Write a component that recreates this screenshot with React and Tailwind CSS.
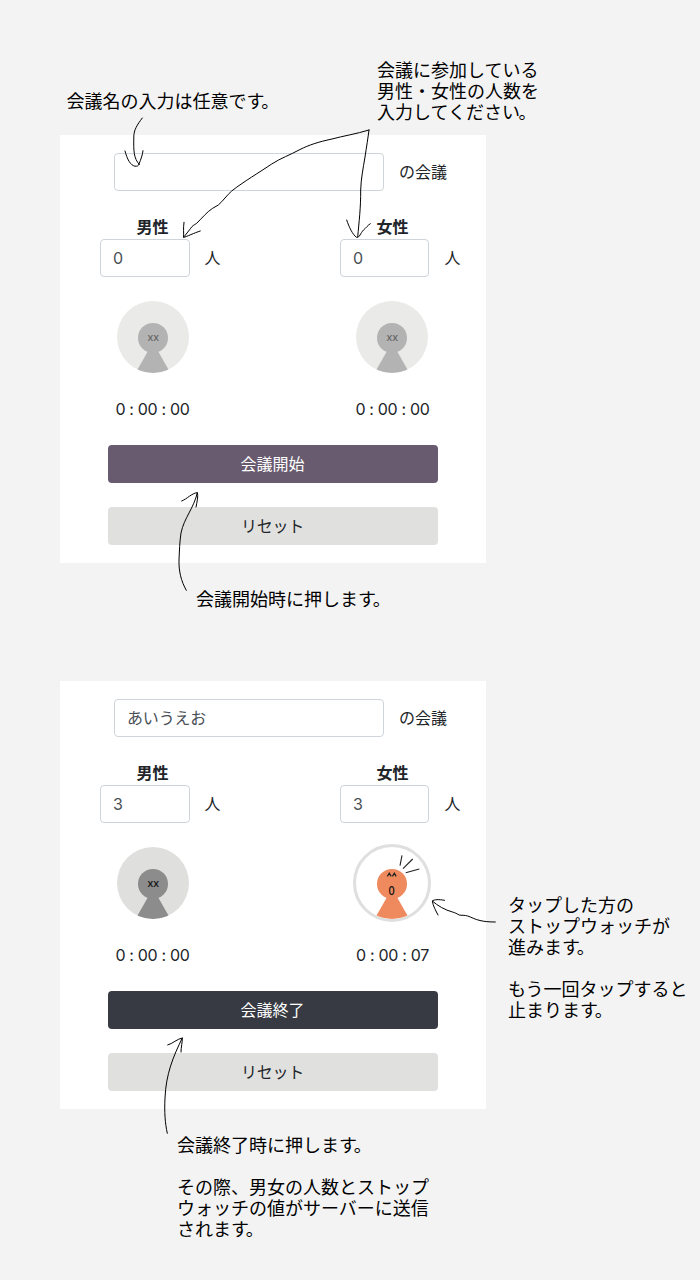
const AVATAR_THEMES = {
  idle: { disc: '#dfdfdd', figure: '#8c8c8c' },
  active: { disc: '#ffffff', figure: '#ef8a5f' },
};

function Avatar({ id, active, dimmed }) {
  const theme = active ? AVATAR_THEMES.active : AVATAR_THEMES.idle;
  return (
    <svg
      viewBox="-40 -40 80 80"
      className={dimmed ? 'h-20 w-20 shrink-0 opacity-65' : 'h-20 w-20 shrink-0'}
    >
      <defs>
        <clipPath id={id}>
          <circle r="36" />
        </clipPath>
      </defs>
      {active ? (
        <circle r="37.5" fill="#ffffff" stroke="#dfdfdf" strokeWidth="3" />
      ) : (
        <circle r="36" fill={theme.disc} />
      )}
      <g fill={theme.figure} clipPath={`url(#${id})`}>
        <circle cy="0.9" r="15" />
        <path d="M-5 14H5L18 37H-18Z" />
      </g>
      {active ? (
        <g>
          <path d="M8 -17.3L10 -27.7M11 -14.3L20.7 -24M13.7 -10.2L27.3 -14" stroke="#222" strokeWidth="1.1" fill="none" />
          <path d="M-4.6 -6.6L-2.7 -9.8L-0.8 -6.6M0.4 -6.6L2.3 -9.8L4.2 -6.6" stroke="#222" strokeWidth="1.3" fill="none" />
          <text x="-0.5" y="11.5" textAnchor="middle" fontSize="12" fontWeight="500" fontFamily="'Noto Sans', sans-serif" textLength="6.2" lengthAdjust="spacingAndGlyphs" fill="#111">0</text>
        </g>
      ) : (
        <text x="0.3" y="4.2" textAnchor="middle" fontSize="11.5" fontWeight="500" fontFamily="'Noto Sans', sans-serif" textLength="11.5" lengthAdjust="spacingAndGlyphs" fill="#111">xx</text>
      )}
    </svg>
  );
}

function Field({ className, value }) {
  return (
    <input
      type="text"
      readOnly
      value={value}
      className={`h-[38px] rounded border border-[#ced4da] bg-white px-3 text-[#495057] outline-none ${className}`}
    />
  );
}

function Group({ id, label, count, time, active, dimmed, avatarClass, inputWidth, gap }) {
  return (
    <div className="flex w-60 shrink-0 flex-col">
      <div className="w-[105px] text-center font-bold">{label}</div>
      <div className={`flex items-center ${gap}`}>
        <Field value={count} className={inputWidth} />
        <span className="-ml-[0.5px]">人</span>
      </div>
      <div className="mt-5 flex w-[105px] flex-col items-center">
        <div className={avatarClass}>
          <Avatar id={id} active={active} dimmed={dimmed} />
        </div>
        <div className="mt-5 whitespace-nowrap tracking-[-0.02em] [font-feature-settings:'calt'_0]">{time}</div>
      </div>
    </div>
  );
}

function MeetingCard({ id, name, count, femaleTime, running }) {
  return (
    <section className="flex h-[428px] w-[426px] shrink-0 flex-col overflow-hidden bg-white pt-[18px] text-base leading-6 text-[#212529]">
      <div className="flex items-center gap-[15px] pl-[54px]">
        <Field value={name} className="w-[270px] pb-[3px] tracking-[-0.01em]" />
        <span>の会議</span>
      </div>
      <div className="mt-6 flex pl-10">
        <Group id={`${id}-m`} label="男性" count={count} time="0 : 00 : 00" dimmed={!running} avatarClass="ml-px" inputWidth="w-[90px]" gap="gap-[15px]" />
        <Group id={`${id}-f`} label="女性" count={count} time={femaleTime} active={running} dimmed={!running} avatarClass="mr-px" inputWidth="w-[89px]" gap="gap-4" />
      </div>
      <div className="ml-12 mt-6 flex w-[330px] flex-col gap-6">
        <button className={running ? 'h-[38px] rounded bg-[#373a42] pr-px text-white' : 'h-[38px] rounded bg-[#685b6f] pr-px text-white'}>
          {running ? '会議終了' : '会議開始'}
        </button>
        <button className="h-[38px] rounded bg-[#e0e0de] pb-px pr-px tracking-[-0.015em]">リセット</button>
      </div>
    </section>
  );
}

function NoteLine({ text }) {
  if (!text.endsWith('。')) {
    return <span className="block h-[21px]">{text}</span>;
  }
  return (
    <span className="block h-[21px]">
      {text.slice(0, -2)}
      <span className="tracking-[-1.5px]">{text.slice(-2)}</span>
    </span>
  );
}

function Note({ className = '', lines }) {
  return (
    <p lang="ja" className={`whitespace-nowrap text-lg leading-[21px] text-black ${className}`}>
      {lines.map((line, i) => (
        <NoteLine key={i} text={line} />
      ))}
    </p>
  );
}

function Arrows() {
  return (
    <svg
      viewBox="0 0 700 1280"
      className="pointer-events-none absolute left-0 top-0 h-[1280px] w-[700px]"
      fill="none"
      stroke="#000"
      strokeWidth="1"
      strokeLinecap="round"
      strokeLinejoin="round"
    >
      <path d="M142.3 118C137 125 133.8 130 133.8 137C133.6 151 133.5 158 139.3 164.5M125 151C127 159 130.500 165.500 135 166.200C137 166.400 138.500 166 139 164C141 159 142.500 155 143 150.700" />
      <path d="M369 130C356 134 343 136 332 139C318 142 309 145 300 149.500C290 155 281 158 271.700 164C260 172 243 182 231.700 191C227 195 223 201 218.300 205L212.300 208.500C207 212 202 218 196.700 223.300C194 225 192 226 190.700 228.300L184.300 236.500M184 222.300C183 229 184 233 183.500 237.500C187 236.500 194 233 200.300 231" />
      <path d="M369 130C368 138 366.500 147 365 157C363 169 361 179 360.700 190C360.800 208 359 222 357.700 237M346.700 220C349 227 352.500 234.500 356.500 237.300C359.500 238 360.500 233 363.500 230C366 228 368 225 370.300 223.700" />
      <path d="M186.300 590.300C181 581 178.700 571 179 560C179.500 550 179.500 543 181 533C184 518 194 508 197.300 492.700M181.700 501C187 499 192 493 197.300 492.700C198.500 496 197 502 196 507" />
      <path d="M167.300 1133.300C165 1123 164.300 1112 165 1098C166 1074 173 1057 182.300 1038M167.700 1045C173 1043.500 177 1039 182.300 1038C182.500 1042 181 1047 181 1052" />
      <path d="M495.300 922C489 922 484 921.500 480 920.500C475 919.500 471 917 467.700 916C465 915 461 915.500 459.300 915C457 914 455 912.500 452.500 912C445 910 438 906 432.300 901M438 915C436 911 433 906 432.300 901C434 899.500 439 899.200 444.500 900.300" />
    </svg>
  );
}

export default function App() {
  return (
    <main className="relative flex h-[1280px] w-[700px] flex-col overflow-hidden bg-[#f3f3f3] font-[Inter,'Noto_Sans_CJK_JP',sans-serif]">
      <div className="flex h-[135px] shrink-0 pl-[66.5px]">
        <Note className="mt-[91px] w-[310.5px]" lines={['会議名の入力は任意です。']} />
        <Note className="mt-[60px]" lines={['会議に参加している', '男性・女性の人数を', '入力してください。']} />
      </div>
      <div className="flex pl-[60px]">
        <MeetingCard id="ready" name="" count="0" femaleTime="0 : 00 : 00" />
      </div>
      <div className="h-[118px] shrink-0 pl-[196px] pt-[26px]">
        <Note lines={['会議開始時に押します。']} />
      </div>
      <div className="flex pl-[60px]">
        <MeetingCard id="running" name="あいうえお" count="3" femaleTime="0 : 00 : 07" running />
        <Note
          className="ml-[22px] mt-[214px]"
          lines={['タップした方の', 'ストップウォッチが', '進みます。', '', 'もう一回タップすると', '止まります。']}
        />
      </div>
      <div className="pl-[177px] pt-[26px]">
        <Note lines={['会議終了時に押します。', '', 'その際、男女の人数とストップ', 'ウォッチの値がサーバーに送信', 'されます。']} />
      </div>
      <Arrows />
    </main>
  );
}
